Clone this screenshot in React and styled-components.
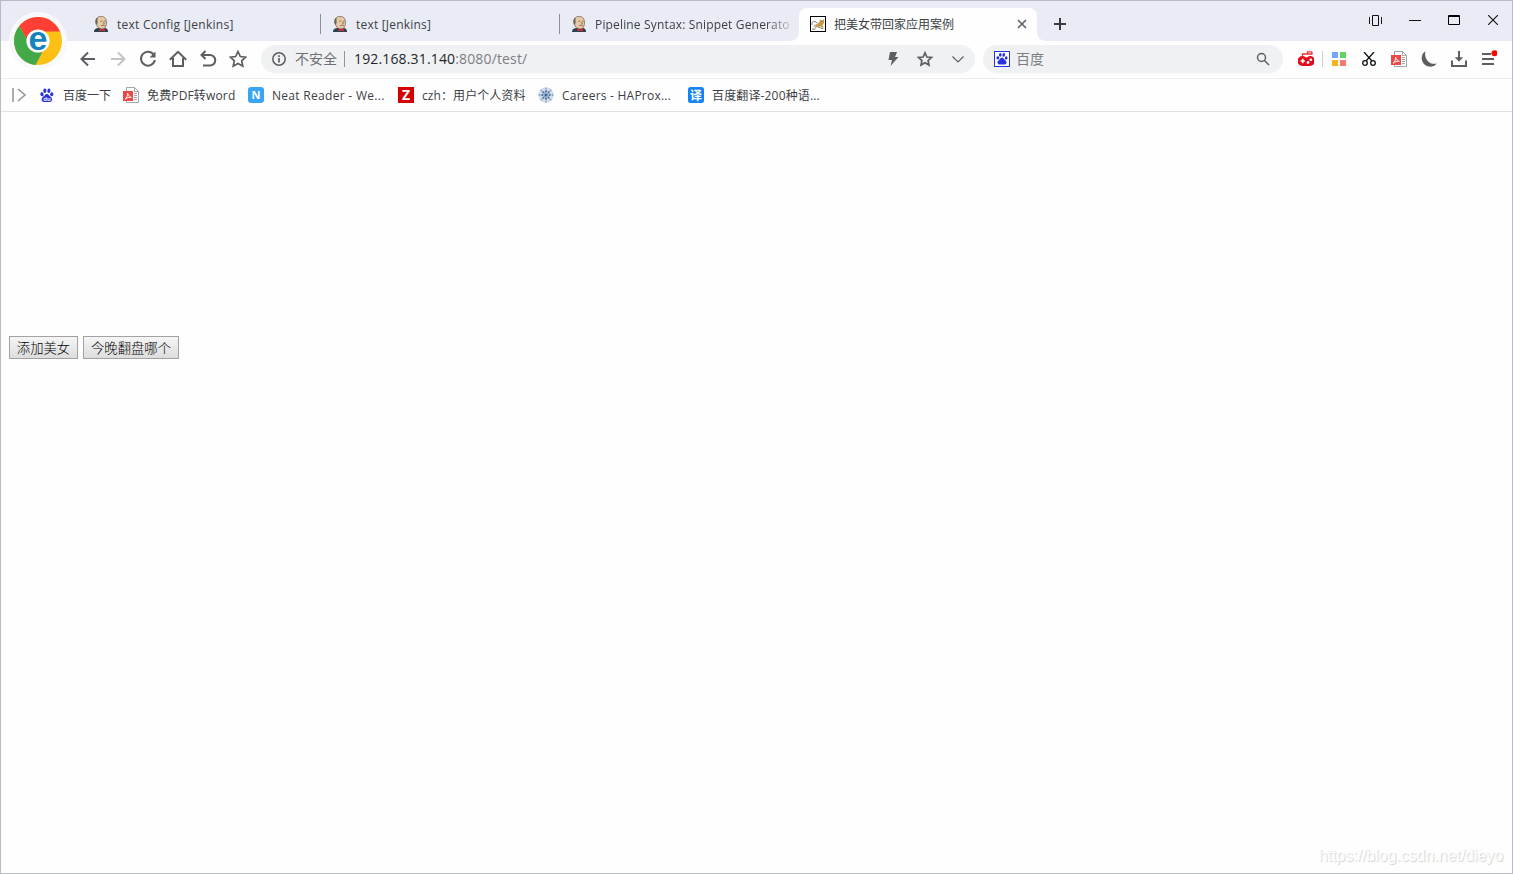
import styled, { createGlobalStyle } from 'styled-components'

const GlobalStyle = createGlobalStyle`
  *{
    box-sizing: border-box;
  }
  body{
    margin: 0;
    overflow: hidden;
    font-family: "Open Sans", "Noto Sans CJK SC", sans-serif;
  }
  svg{
    display: block;
    flex-shrink: 0;
  }
`

const Window = styled.div`
  position: relative;
  width: 100vw;
  height: 100vh;
  display: flex;
  flex-direction: column;
  background: #fefefe;
  border: 1px solid #b9bac3;
`
const TabBar = styled.div`
  height: 40px;
  display: flex;
  align-items: flex-end;
  flex-shrink: 0;
  padding-left: 81px;
  background: #e9ecf4;
`
const Logo = styled.div`
  position: absolute;
  left: 8px;
  top: 11px;
`
const Tab = styled.div`
  position: relative;
  width: ${props => props.$active ? '238px' : '239px'};
  height: 33px;
  display: flex;
  align-items: center;
  gap: 8px;
  padding: 0 10px 1px 11px;
  border-radius: 8px 8px 0 0;
  background: ${props => props.$active ? '#fefefe' : 'transparent'};
  &::after{
    content: "";
    display: ${props => props.$line ? 'block' : 'none'};
    position: absolute;
    right: 0;
    top: 6px;
    width: 1px;
    height: 20px;
    background: #8f9197;
  }
`
// round foot where the active tab meets the toolbar
const Foot = styled.span`
  position: absolute;
  bottom: 0;
  ${props => props.$side}: -8px;
  width: 8px;
  height: 8px;
  background: radial-gradient(circle at ${props => props.$side === 'left' ? '0 0' : '100% 0'}, transparent 7.5px, #fefefe 8px);
`
const Title = styled.span`
  flex: 1;
  min-width: 0;
  padding-top: 2px;
  white-space: nowrap;
  font-size: 12px;
  line-height: 18px;
  letter-spacing: ${props => props.$ls || '0'};
  color: #3c3f45;
  ${props => props.$fade && `
    mask-image: linear-gradient(90deg, #000 88%, transparent 104%);
  `}
`
const NewTab = styled.div`
  width: 46px;
  height: 33px;
  display: flex;
  align-items: center;
  justify-content: center;
  padding-bottom: 1px;
`
const Controls = styled.div`
  height: 40px;
  display: flex;
  align-items: center;
  margin-left: auto;
`
const Control = styled.div`
  width: 39px;
  height: 40px;
  display: flex;
  align-items: center;
  justify-content: center;
  padding-bottom: 2px;
`
const Toolbar = styled.div`
  height: 38px;
  display: flex;
  align-items: center;
  flex-shrink: 0;
  padding: 0 0 1px 72px;
  border-bottom: 1px solid #ededf0;
`
const Tool = styled.div`
  width: 30px;
  height: 30px;
  display: flex;
  align-items: center;
  justify-content: center;
`
const Extras = styled.div`
  display: flex;
  align-items: center;
  margin-left: 8px;
`
const Field = styled.div`
  width: ${props => props.$w};
  height: 28px;
  display: flex;
  align-items: center;
  margin-left: 8px;
  padding: 0 ${props => props.$pr} 0 ${props => props.$pl};
  border-radius: 14px;
  background: #f0f1f3;
  font-size: 14px;
  line-height: 20px;
  white-space: nowrap;
  color: #7b7e83;
`
const Unsafe = styled.span`
  width: 50px;
  height: 16px;
  display: flex;
  align-items: center;
  margin: 0 9px 0 9px;
  border-right: 1px solid #94969a;
  color: #6c6f75;
`
const Url = styled.span`
  flex: 1;
  letter-spacing: .15px;
  b{
    font-weight: 400;
    color: #25272c;
  }
`
const Hint = styled.span`
  flex: 1;
  margin-left: 6px;
`
const FieldIcons = styled.div`
  display: flex;
  align-items: center;
  gap: 14px;
`
const Split = styled.div`
  width: 1px;
  height: 16px;
  margin: 0 1px;
  background: #cfd0d3;
`
const Bookmarks = styled.div`
  height: 33px;
  display: flex;
  align-items: center;
  flex-shrink: 0;
  padding-left: 11px;
  border-bottom: 1px solid #e1e1e4;
`
const Expand = styled.div`
  width: 27px;
`
const Bookmark = styled.div`
  width: ${props => props.$w};
  display: flex;
  align-items: center;
  gap: 8px;
  font-size: 12px;
  line-height: 18px;
  white-space: nowrap;
  letter-spacing: ${props => props.$ls || '0'};
  color: #3c3f45;
  span{
    padding-top: 2px;
  }
`
const Page = styled.main`
  flex: 1;
  display: flex;
  align-items: flex-start;
  gap: 5px;
  padding: 224px 8px 0;
`
const Button = styled.button`
  width: ${props => props.$w};
  height: 23px;
  padding: 0;
  border: 1px solid #a2a2a2;
  border-radius: 0;
  background: linear-gradient(#f5f5f5, #dddddd);
  font-family: "Noto Sans CJK SC", sans-serif;
  font-size: 13.333px;
  font-weight: 300;
  line-height: 20px;
  color: #000;
`
const Watermark = styled.div`
  position: absolute;
  right: 9px;
  bottom: 7px;
  font-family: "Liberation Sans", Arial, sans-serif;
  font-size: 16px;
  line-height: 20px;
  letter-spacing: -.06px;
  color: #fdfdfd;
  text-shadow: 1px 1px 1px #d2d2d2;
`

const Svg = ({ s = 18, w, h, sw = 2, c = '#5c5e61', children, ...rest }) => (
  <svg width={w || s} height={h || s} viewBox={`0 0 ${w || s} ${h || s}`} fill="none" stroke={c} strokeWidth={sw} {...rest}>
    {children}
  </svg>
)

const BrowserLogo = () => (
  <svg width="58" height="58" viewBox="0 0 58 58">
    <circle cx="29" cy="29" r="29" fill="#f8f9fc" />
    <circle cx="29" cy="29" r="24" fill="#fcc015" />
    <path d="M29 19.5H51A24 24 0 0 0 10.3 14L20 31Z" fill="#ff3e35" />
    <path d="M10.3 14A24 24 0 0 0 26.6 53L36 35 20 31Z" fill="#42a948" />
    <circle cx="29" cy="29" r="11.6" fill="#fff" />
    <text x="29" y="38.200" textAnchor="middle" fontFamily="Liberation Sans" fontSize="34" fontWeight="700" fill="#1583bd">e</text>
  </svg>
)

const Butler = () => (
  <svg width="16" height="16" viewBox="0 0 16 16">
    <path d="M1 16C1 13 3 12.4 5 12L12 12C14.5 12.6 15 14 15 16Z" fill="#294353" />
    <path d="M3.400 3.500C4.200 .9 6 .4 8 .4C12 .4 13.700 3 13.500 7C13.300 10.500 12 12.800 9.400 13C6 13 4 11 3.500 8Z" fill="#e7c9a3" stroke="#6a5b4e" strokeWidth=".7" />
    <path d="M3 9C1.600 6 2 2.700 4.300 1.400C4.600 3.500 4.400 5 4.700 7Z" fill="#6d6258" />
    <path d="M7.300 5.200h2M11 5.200h1.700M10.500 5.800l.8 2.200-1 .1M8 9.800c1.500-.8 2.800-.5 4 .1" stroke="#75655a" strokeWidth=".8" fill="none" />
    <path d="M6.500 12.300L9.300 13.600 12 12.300V15.600L9.300 14.500 6.500 15.600Z" fill="#d82b31" />
  </svg>
)

const CatIcon = () => (
  <svg width="16" height="16" viewBox="0 0 16 16">
    <rect x=".5" y=".5" width="15" height="15" fill="#fff" stroke="#000" />
    <path d="M4 13l2-3.500 2.500-2.700 1.200-.8L9.400 3l1.300 1.300h2L14 3v4l-1.600 2 1.500 4-3-2.400-3 .2-2.500 1.200z" fill="#c79a45" />
    <path d="M2 9C1.600 6.300 3 4.800 5 5.500L7.500 7.200M2 13h3.500M3.500 10.500l3-2M8 11l5 1.800M10.700 6h.8M12.500 6h.7" stroke="#77716a" strokeWidth=".9" fill="none" />
  </svg>
)

const Paw = ({ box, mark }) => (
  <svg width="16" height="16" viewBox="0 0 16 16">
    {box && <rect x=".5" y=".5" width="15" height="15" fill="#fff" stroke="#2932e1" />}
    <g fill="#2932dd" transform={box ? 'translate(1.7 1.5) scale(.79)' : 'translate(.5 1) scale(.92)'}>
      <ellipse cx="2.7" cy="6.8" rx="1.8" ry="2.2" transform="rotate(-12 2.7 6.8)" />
      <ellipse cx="5.8" cy="3" rx="1.7" ry="2.4" />
      <ellipse cx="10.2" cy="3" rx="1.7" ry="2.4" transform="rotate(10 10.2 3)" />
      <ellipse cx="13.3" cy="6.9" rx="1.7" ry="2.2" />
      <path d="M8 6.400c1.700 0 2.200 1.500 3.400 2.700 1.400 1.300 2.800 2.200 2.200 4.300-.6 2.200-2.800 2-5.600 1.700-2.800.3-5 .5-5.600-1.700-.6-2.100.8-3 2.200-4.300C5.800 7.900 6.300 6.400 8 6.400Z" />
    </g>
    {mark && <text x="8" y="13.600" textAnchor="middle" fontFamily="Liberation Sans" fontWeight="700" fontSize="6" fill="#fff">du</text>}
  </svg>
)

const PdfIcon = () => (
  <svg width="16" height="16" viewBox="0 0 16 16">
    <path d="M3.500 .5H11.500L15.500 4.500V15.500H3.500Z" fill="#fff" stroke="#a6a6a9" />
    <path d="M11.500 .5V4.500H15.500M11 6.500h3M11 8.500h3M11 10.500h3M11 12.500h3" stroke="#a6a6a9" fill="none" />
    <rect y="4" width="10" height="10" fill="#e94a45" />
    <path d="M2 12.200C4 10.800 4.700 8.500 4.600 6.200c1 2.500 1.800 3.500 3.700 4.200C6 10.100 4 10.700 2 12.200Z" stroke="#fff" strokeWidth=".9" fill="none" />
  </svg>
)

const Badge = ({ bg, r, size, y = 12, children }) => (
  <svg width="16" height="16" viewBox="0 0 16 16">
    <rect width="16" height="16" rx={r} fill={bg} />
    <text x="8" y={y} textAnchor="middle" fontFamily="Open Sans, Noto Sans CJK SC" fontWeight="700" fontSize={size} fill="#fff">{children}</text>
  </svg>
)

const spokes = [0, 45, 90, 135, 180, 225, 270, 315]
const HaproxyIcon = () => (
  <svg width="16" height="16" viewBox="0 0 16 16">
    <circle cx="8" cy="8" r="7.800" fill="#d3dde9" />
    {spokes.map(a => (
      <g key={a} transform={`rotate(${a} 8 8)`} fill="#4f79a8">
        <path d="M8 8V3" stroke="#7899bd" strokeWidth=".7" />
        <circle cx="8" cy="4.300" r="1.100" />
        <circle cx="8" cy="1.500" r=".9" fill="#86a3c3" />
      </g>
    ))}
    <circle cx="8" cy="8" r="1.500" fill="#39638f" />
  </svg>
)

const Gamepad = () => (
  <svg width="16" height="16" viewBox="0 0 16 16">
    <path d="M14 .8H9.500V3H4.500V5.500M14 .8V3H9" stroke="#e8323a" strokeWidth="1.300" fill="none" />
    <path d="M4.500 5C7 5 7 6.500 8.500 6.500S10 5 12 5a5 5 0 0 1 0 10H4.500a5 5 0 0 1 0-10Z" fill="#e20a1b" />
    <path d="M2.500 10h4.400M4.700 7.800v4.400" stroke="#fff" strokeWidth="1.600" />
    <circle cx="10" cy="11.500" r="1.400" fill="#fff" />
    <circle cx="12.800" cy="8.800" r="1.400" fill="#fff" />
  </svg>
)

const marks = [
  { icon: <Paw mark />, text: '百度一下', w: '84px' },
  { icon: <PdfIcon />, text: '免费PDF转word', w: '125px', ls: '.15px' },
  { icon: <Badge bg="#38a5f5" r="3" size="11">N</Badge>, text: 'Neat Reader - We...', w: '150px', ls: '.3px' },
  { icon: <Badge bg="#d40000" r="0" size="14" y={13}>Z</Badge>, text: 'czh：用户个人资料', w: '140px', ls: '.08px' },
  { icon: <HaproxyIcon />, text: 'Careers - HAProx...', w: '150px', ls: '.22px' },
  { icon: <Badge bg="#1683f5" r="2.5" size="12" y={12.5}>译</Badge>, text: '百度翻译-200种语...', w: '150px', ls: '.15px' },
]

function App() {
  return (
    <Window>
      <GlobalStyle />
      <TabBar>
        <Tab $line><Butler /><Title $ls=".26px">text Config [Jenkins]</Title></Tab>
        <Tab $line><Butler /><Title $ls=".2px">text [Jenkins]</Title></Tab>
        <Tab><Butler /><Title $fade $ls=".16px">Pipeline Syntax: Snippet Generato</Title></Tab>
        <Tab $active>
          <Foot $side="left" />
          <CatIcon />
          <Title>把美女带回家应用案例</Title>
          <Svg s={10} sw={1.6}><path d="M1 1l8 8M9 1l-8 8" /></Svg>
          <Foot $side="right" />
        </Tab>
        <NewTab>
          <Svg s={12} c="#38393c"><path d="M0 6h12M6 0v12" /></Svg>
        </NewTab>
        <Controls>
          <Control>
            <Svg w={13} h={11} sw={1} c="#111">
              <path d="M.5 2v7M12.500 2v7M3.500 .5h6v10h-6z" />
            </Svg>
          </Control>
          <Control><Svg w={12} h={1} sw={1} c="#111"><path d="M0 .5h12" /></Svg></Control>
          <Control>
            <Svg w={12} h={10} sw={1} c="#000"><path d="M.5 .5h11v9H.5zM0 1.500h12" /></Svg>
          </Control>
          <Control><Svg s={10} sw={1.1} c="#111"><path d="M0 0l10 10M10 0L0 10" /></Svg></Control>
        </Controls>
      </TabBar>

      <Toolbar>
        <Tool><Svg><path d="M16 9H3M9 2.500L2.500 9 9 15.500" /></Svg></Tool>
        <Tool><Svg c="#c2c3c5"><path d="M2 9h13M9 2.500l6.500 6.500L9 15.500" /></Svg></Tool>
        <Tool>
          <Svg><path d="M14.800 4.700A7 7 0 1 0 15.900 10" /><path d="M16.500 1.500V7.500H10.500z" fill="#5c5e61" stroke="none" /></Svg>
        </Tool>
        <Tool><Svg><path d="M.8 9.700L9 1.800l8.200 7.900M4 8v8h10V8" /></Svg></Tool>
        <Tool><Svg><path d="M2.500 5H11a5 5 0 0 1 0 10.500H4M6.500 1L2.500 5l4 4" /></Svg></Tool>
        <Tool>
          <Svg sw={1.7}>
            <path d="M9 1.500l2.300 5 5.400.6-4 3.700 1.100 5.400L9 13.500l-4.800 2.700 1.100-5.400-4-3.700 5.400-.6z" />
          </Svg>
        </Tool>

        <Field $w="714px" $pl="11px" $pr="9px">
          <Svg s={14} sw={1.5}>
            <circle cx="7" cy="7" r="6.200" />
            <path d="M7 6v4.500M7 3.300v1.600" strokeWidth="1.7" />
          </Svg>
          <Unsafe>不安全</Unsafe>
          <Url><b>192.168.31.140</b>:8080/test/</Url>
          <FieldIcons>
            <Svg w={14} h={16} c="none"><path d="M4 1h7L9 6h3.500L4.500 15 6 9H2.500z" fill="#5c5e61" /></Svg>
            <Svg w={22} h={16} viewBox="-2 1 22 16" sw={1.7}>
              <path d="M9 2.800l1.900 4.200 4.600.5-3.400 3.100.9 4.500-4-2.300-4 2.300.9-4.500-3.400-3.100 4.600-.5z" />
            </Svg>
            <Svg s={16} sw={1.2}><path d="M2.500 5.500l5.500 5.500 5.500-5.500" /></Svg>
          </FieldIcons>
        </Field>

        <Field $w="300px" $pl="11px" $pr="13px">
          <Paw box />
          <Hint>百度</Hint>
          <Svg s={14} sw={1.5}><circle cx="5.500" cy="5.500" r="4" /><path d="M8.500 8.500l4.500 4.500" /></Svg>
        </Field>

        <Extras>
          <Tool><Gamepad /></Tool>
          <Split />
          <Tool>
            <svg width="14" height="14" viewBox="0 0 14 14">
              <rect width="6" height="6" fill="#76a5ff" />
              <rect x="8" width="6" height="6" fill="#62d262" />
              <rect y="8" width="6" height="6" fill="#f6b31d" />
              <rect x="8" y="8" width="6" height="6" fill="#f37b72" />
            </svg>
          </Tool>
          <Tool>
            <Svg s={14} sw={1.3} c="#111">
              <path d="M2 0l8 9M12 0L4 9" />
              <circle cx="3" cy="11" r="2.300" />
              <circle cx="11" cy="11" r="2.300" />
            </Svg>
          </Tool>
          <Tool><PdfIcon /></Tool>
          <Tool>
            <Svg s={16} c="none"><path d="M4.500 0A8.600 8.600 0 1 0 16 12.500C8.500 14.500 2.500 7.500 4.500 0Z" fill="#5c5e61" /></Svg>
          </Tool>
          <Tool>
            <Svg s={16}><path d="M8 0v9M1 9.500V15h14V9.500" /><path d="M3.800 6.200h8.400L8 10.800z" fill="#5c5e61" stroke="none" /></Svg>
          </Tool>
          <Tool>
            <Svg w={16} h={18}>
              <path d="M1 4h9M1 9h12M1 14h12" />
              <circle cx="13.500" cy="3.200" r="3" fill="#f00" stroke="none" />
            </Svg>
          </Tool>
        </Extras>
      </Toolbar>

      <Bookmarks>
        <Expand>
          <Svg w={16} h={16} sw={1.5} c="#909296"><path d="M1 1v14M6 2l7 6-7 6" /></Svg>
        </Expand>
        {marks.map(m => (
          <Bookmark key={m.text} $w={m.w} $ls={m.ls}>{m.icon}<span>{m.text}</span></Bookmark>
        ))}
      </Bookmarks>

      <Page>
        <Button $w="69px">添加美女</Button>
        <Button $w="96px">今晚翻盘哪个</Button>
      </Page>

      <Logo><BrowserLogo /></Logo>
      <Watermark>https://blog.csdn.net/dieyo</Watermark>
    </Window>
  )
}

export default App
